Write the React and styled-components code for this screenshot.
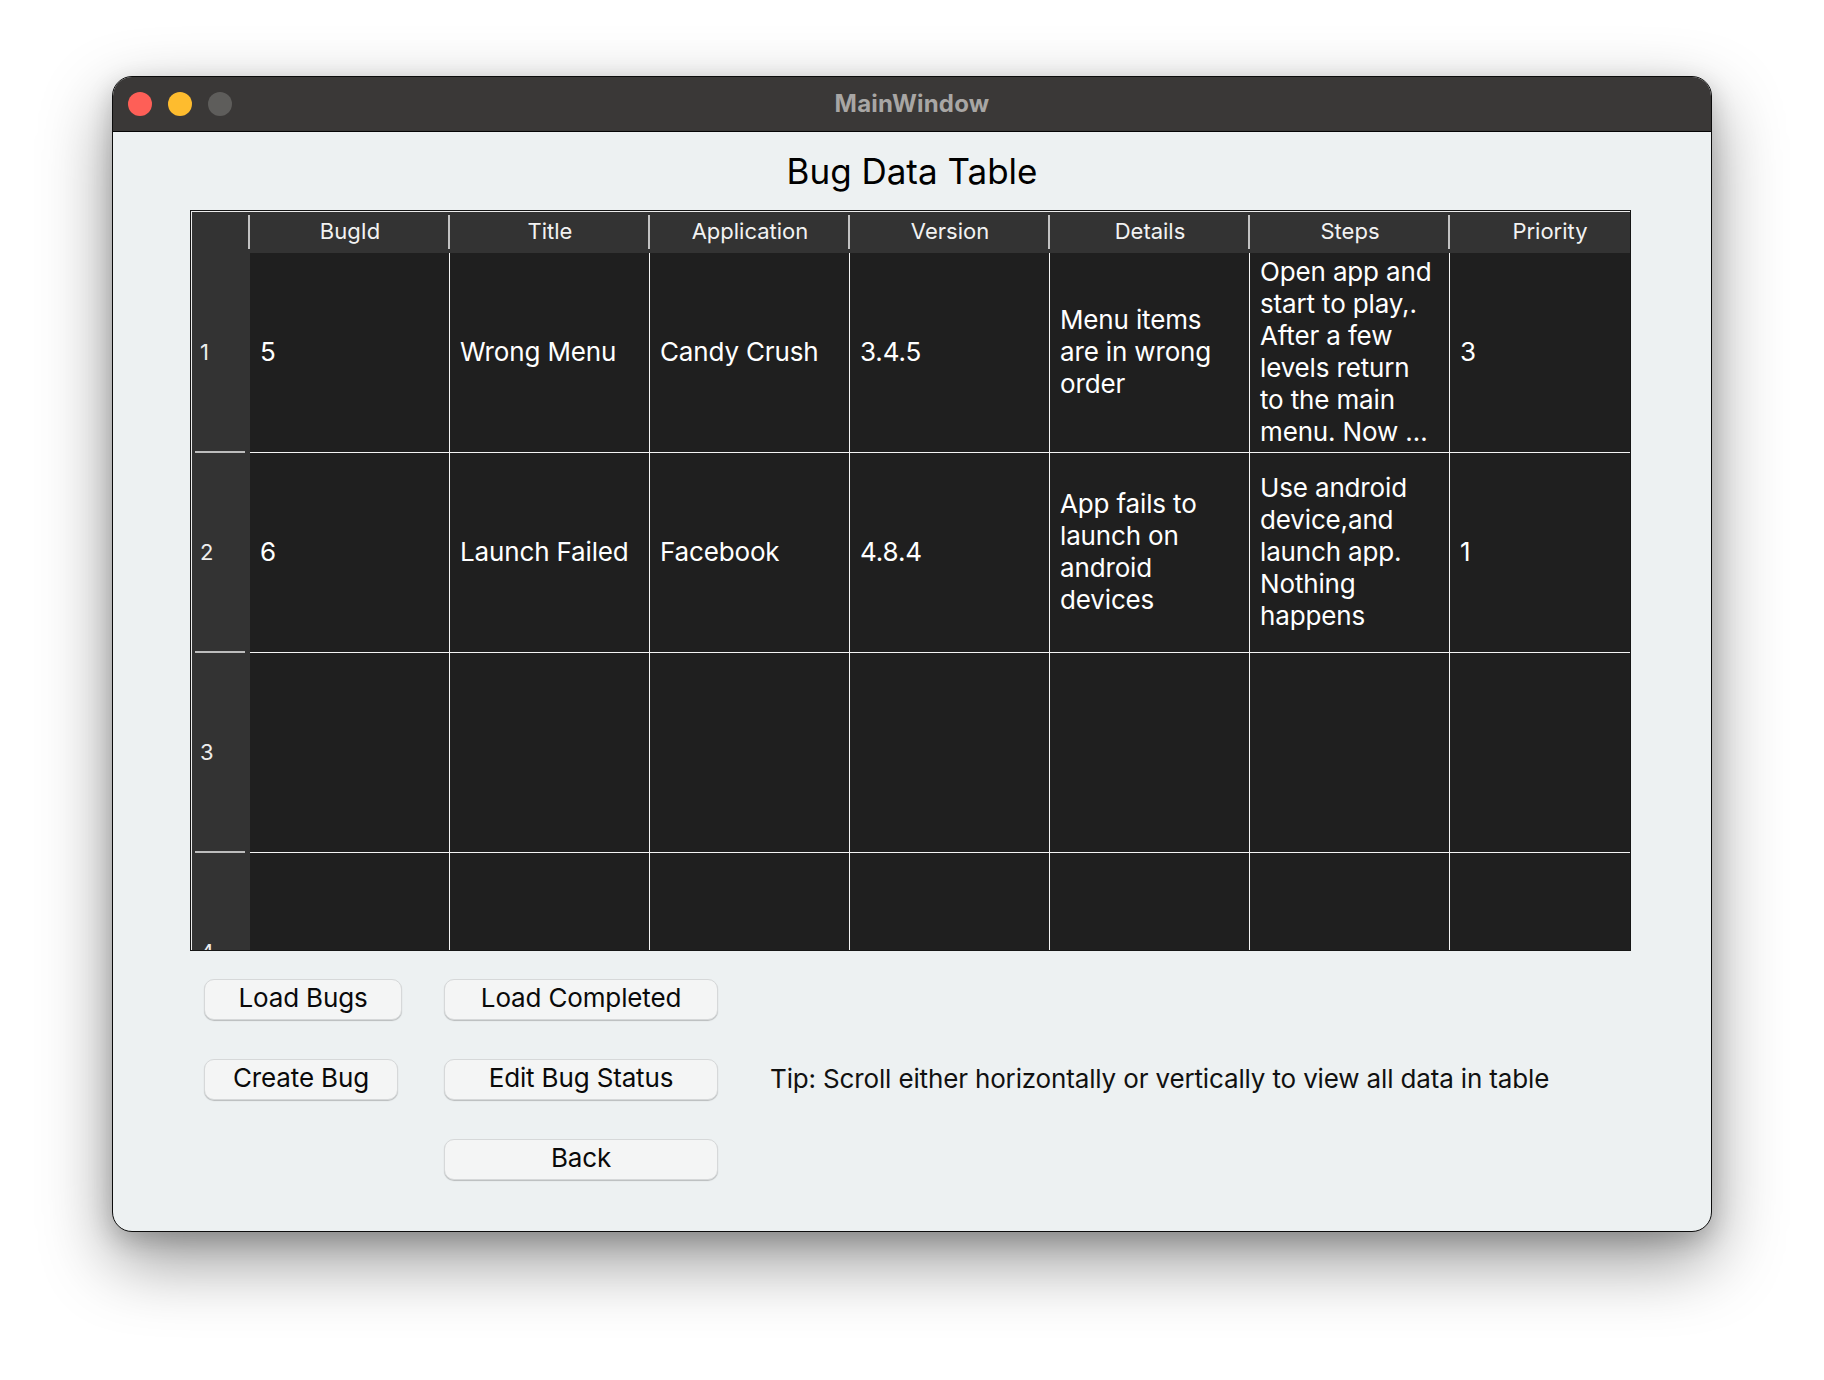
import styled, { createGlobalStyle } from 'styled-components';

const GlobalStyle = createGlobalStyle`
  html, body {
    margin: 0;
    padding: 0;
    background: #ffffff;
  }
  body {
    font-family: Inter, "Liberation Sans", sans-serif;
  }
`;

const Desktop = styled.div`
  width: 1824px;
  height: 1380px;
  box-sizing: border-box;
  padding: 76px 0 0 112px;
  background: #ffffff;
`;

const Window = styled.div`
  width: 1600px;
  height: 1156px;
  box-sizing: border-box;
  border: 1px solid #0c0c0c;
  border-radius: 20px;
  overflow: hidden;
  background: #edf1f2;
  box-shadow: 0 28px 70px rgba(0, 0, 0, 0.42), 0 8px 24px rgba(0, 0, 0, 0.18);
  display: flex;
  flex-direction: column;
`;

const TitleBar = styled.div`
  height: 55px;
  flex-shrink: 0;
  box-sizing: border-box;
  background: #3a3837;
  border-bottom: 1px solid #050505;
  display: grid;
  grid-template-columns: 1fr auto 1fr;
  align-items: center;
`;

const Lights = styled.div`
  display: flex;
  gap: 16px;
  padding-left: 15px;
`;

const Light = styled.span`
  width: 24px;
  height: 24px;
  border-radius: 50%;
  background: ${(p) => p.color};
`;

const WindowTitle = styled.div`
  font-size: 24px;
  font-weight: 700;
  color: #a8a6a4;
  letter-spacing: 0.2px;
  padding-bottom: 2px;
`;

const Content = styled.div`
  flex: 1;
  display: flex;
  flex-direction: column;
  padding-left: 77px;
`;

const Heading = styled.h1`
  margin: 18px 0 0 -77px;
  font-size: 35px;
  line-height: 42px;
  font-weight: 400;
  color: #000;
  text-align: center;
`;

const Frame = styled.div`
  margin-top: 18px;
  width: 1441px;
  height: 741px;
  box-sizing: border-box;
  border: 1px solid #161616;
  background: #1f1f1f;
`;

const Viewport = styled.div`
  width: 100%;
  height: 100%;
  box-sizing: border-box;
  border-top: 1px solid #ececec;
  border-left: 1px solid #ececec;
  overflow: hidden;
`;

const Grid = styled.div`
  display: grid;
  grid-template-columns: 58px repeat(7, 200px);
  grid-template-rows: 41px repeat(4, 200px);
  width: max-content;
`;

const HeaderCell = styled.div`
  background: linear-gradient(#c2c2c2, #c2c2c2) no-repeat right 0 top 3px / 2px 34px, #333333;
  color: #f2f2f2;
  font-size: 22px;
  display: flex;
  align-items: center;
  justify-content: center;
  padding-bottom: 4px;
  box-sizing: border-box;
`;

const RowHeader = styled.div`
  background: linear-gradient(#bdbdbd, #bdbdbd) no-repeat left 3px bottom 0 / 50px 2px, #333333;
  color: #ededed;
  font-size: 22px;
  display: flex;
  align-items: center;
  padding: 0 0 2px 8px;
`;

const DataCell = styled.div`
  box-sizing: border-box;
  background: #1f1f1f;
  border-right: 1px solid #f4f4f4;
  border-bottom: 1px solid #f4f4f4;
  color: #ffffff;
  font-size: 26px;
  line-height: 32px;
  letter-spacing: -0.15px;
  padding: 0 10px 2px 10px;
  display: flex;
  flex-direction: column;
  justify-content: center;
  white-space: nowrap;
  overflow: hidden;
`;

const Controls = styled.div`
  margin: 28px 0 0 14px;
  display: grid;
  grid-template-columns: 198px 274px auto;
  grid-auto-rows: 41px;
  column-gap: 42px;
  row-gap: 39px;
  align-items: center;
`;

const PushButton = styled.button`
  grid-column: ${(p) => p.col};
  grid-row: ${(p) => p.row};
  width: ${(p) => p.w}px;
  height: 41px;
  box-sizing: border-box;
  border: 1px solid #d6d8d9;
  border-radius: 10px;
  background: #f4f5f5;
  box-shadow: 0 1px 1px rgba(0, 0, 0, 0.22);
  font-family: inherit;
  font-size: 26px;
  letter-spacing: -0.15px;
  color: #0a0a0a;
  padding: 0 0 4px 0;
`;

const Tip = styled.div`
  grid-column: 3;
  grid-row: 2;
  margin-left: 10px;
  font-size: 26px;
  letter-spacing: -0.15px;
  color: #111;
  white-space: nowrap;
  padding-bottom: 2px;
`;

const columns = ['BugId', 'Title', 'Application', 'Version', 'Details', 'Steps', 'Priority'];

const empty = [[], [], [], [], [], [], []];

const rows = [
  {
    id: 1,
    cells: [
      ['5'],
      ['Wrong Menu'],
      ['Candy Crush'],
      ['3.4.5'],
      ['Menu items', 'are in wrong', 'order'],
      ['Open app and', 'start to play,.', 'After a few', 'levels return', 'to the main', 'menu. Now …'],
      ['3'],
    ],
  },
  {
    id: 2,
    cells: [
      ['6'],
      ['Launch Failed'],
      ['Facebook'],
      ['4.8.4'],
      ['App fails to', 'launch on', 'android', 'devices'],
      ['Use android', 'device,and', 'launch app.', 'Nothing', 'happens'],
      ['1'],
    ],
  },
  { id: 3, cells: empty },
  { id: 4, cells: empty },
];

const buttons = [
  { label: 'Load Bugs', col: 1, row: 1, w: 198 },
  { label: 'Load Completed', col: 2, row: 1, w: 274 },
  { label: 'Create Bug', col: 1, row: 2, w: 194 },
  { label: 'Edit Bug Status', col: 2, row: 2, w: 274 },
  { label: 'Back', col: 2, row: 3, w: 274 },
];

export default function App() {
  return (
    <>
      <GlobalStyle />
      <Desktop>
        <Window>
          <TitleBar>
            <Lights>
              <Light color="#fe5f57" />
              <Light color="#febc2e" />
              <Light color="#5e5d5b" />
            </Lights>
            <WindowTitle>MainWindow</WindowTitle>
            <div />
          </TitleBar>
          <Content>
            <Heading>Bug Data Table</Heading>
            <Frame>
              <Viewport>
                <Grid>
                  <HeaderCell />
                  {columns.map((c) => (
                    <HeaderCell key={c}>{c}</HeaderCell>
                  ))}
                  {rows.map((r) => (
                    <>
                      <RowHeader key={'h' + r.id}>{r.id}</RowHeader>
                      {r.cells.map((lines, i) => (
                        <DataCell key={r.id + '-' + i}>
                          {lines.map((l, j) => (
                            <span key={j}>{l}</span>
                          ))}
                        </DataCell>
                      ))}
                    </>
                  ))}
                </Grid>
              </Viewport>
            </Frame>
            <Controls>
              {buttons.map((b) => (
                <PushButton key={b.label} col={b.col} row={b.row} w={b.w}>
                  {b.label}
                </PushButton>
              ))}
              <Tip>Tip: Scroll either horizontally or vertically to view all data in table</Tip>
            </Controls>
          </Content>
        </Window>
      </Desktop>
    </>
  );
}
